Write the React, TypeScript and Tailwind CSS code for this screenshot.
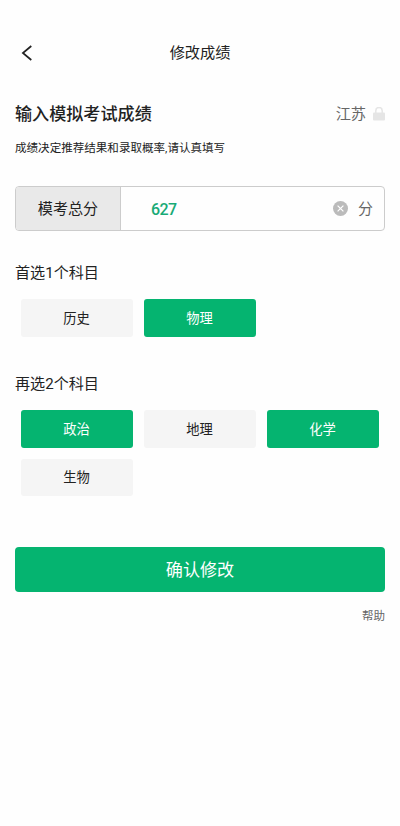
import React from "react";

const font = "font-['Roboto','Noto_Sans_CJK_SC',sans-serif]";

function Option({ label, selected = false }: { label: string; selected?: boolean }) {
  return (
    <button
      className={`flex h-[37.5px] w-28 items-center justify-center rounded-[3px] pt-px text-[13.3px] leading-none ${
        selected ? "bg-[#05b470] text-white" : "bg-[#f5f5f5] text-[#222]"
      }`}
    >
      {label}
    </button>
  );
}

export default function App() {
  return (
    <main className={`h-[826px] w-[400px] overflow-hidden bg-[#fefefe] text-[#222] ${font}`}>
      <header className="mt-[38px] grid h-[30px] grid-cols-[60px_1fr_60px] items-center">
        <button aria-label="返回" className="pl-[21px]">
          <svg width="12" height="16" viewBox="0 0 12 16" fill="none">
            <path d="M10.3 1 1.9 8l8.4 7" stroke="#222" strokeWidth="1.7" />
          </svg>
        </button>
        <h1 className="pt-[2px] text-center text-[15.2px] leading-none">修改成绩</h1>
      </header>
      <section className="px-[15px]">
        <div className="mt-[31px] flex h-[30px] items-center justify-between">
          <h2 className="pt-px text-[17.1px] leading-none font-medium">输入模拟考试成绩</h2>
          <div className="flex items-center gap-[7px] text-[15.2px] leading-none text-[#666]">
            <span className="pt-[2px]">江苏</span>
            <svg width="12" height="14" viewBox="0 0 12 14">
              <path d="M2.8 6V3.7a3.2 3.2 0 0 1 6.4 0V6" fill="none" stroke="#e5e5e5" strokeWidth="1.5" />
              <rect y="5.5" width="12" height="8" rx="1" fill="#e5e5e5" />
            </svg>
          </div>
        </div>
        <p className="mt-[9px] h-5 text-[11.55px] leading-[21px]">成绩决定推荐结果和录取概率,请认真填写</p>
        <div className="mt-[28px] flex h-[45px] overflow-hidden rounded-[4px] border border-[#ccc]">
          <div className="flex w-[105px] items-center justify-center border-r border-[#ccc] bg-[#e9e9e9] pt-[2px] text-[15.1px]">
            模考总分
          </div>
          <div className="flex flex-1 items-center pr-[11px] pl-[30px]">
            <span className="flex-1 pt-[2px] text-[16px] font-medium tracking-[-0.6px] text-[#18aa76]">627</span>
            <svg width="15" height="15" viewBox="0 0 15 15" className="mr-[10px]">
              <circle cx="7.5" cy="7.5" r="7.5" fill="#bbb" />
              <path d="m4.6 4.6 5.8 5.8m0-5.8-5.8 5.8" stroke="white" strokeWidth="1.2" />
            </svg>
            <span className="pt-[2px] text-[15px] text-[#666]">分</span>
          </div>
        </div>
        <h3 className="mt-8 h-5 text-[15.1px] leading-5">首选1个科目</h3>
        <div className="mt-4 grid grid-cols-[112px_112px_112px] gap-x-[11px] pl-[5.5px]">
          <Option label="历史" />
          <Option label="物理" selected />
        </div>
        <h3 className="mt-[37.5px] h-5 text-[15.1px] leading-5">再选2个科目</h3>
        <div className="mt-4 grid grid-cols-[112px_112px_112px] gap-x-[11px] gap-y-[11px] pl-[5.5px]">
          <Option label="政治" selected />
          <Option label="地理" />
          <Option label="化学" selected />
          <Option label="生物" />
        </div>
        <button className="mt-[50.5px] flex h-[45px] w-full items-center justify-center rounded-[4px] bg-[#05b470] pt-[3px] text-[17.1px] text-white">
          确认修改
        </button>
        <div className="mt-[14.5px] text-right text-[11.5px] leading-5 text-[#666]">帮助</div>
      </section>
    </main>
  );
}
